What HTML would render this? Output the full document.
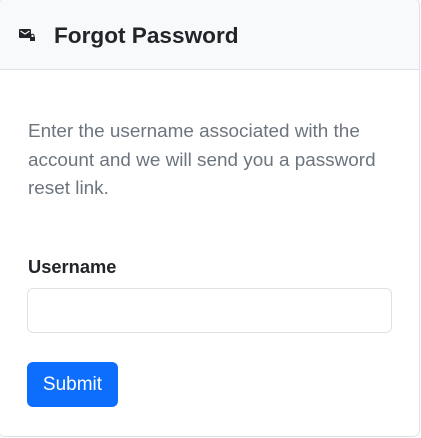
<!DOCTYPE html>
<html><head><style>
html,body{margin:0;padding:0;background:#fff;width:421px;height:438px;overflow:hidden}
body{font-family:"Liberation Sans",sans-serif;}
.card{position:absolute;left:-2px;top:-2px;width:422px;height:439px;border:1px solid #dee2e6;border-radius:7px;box-sizing:border-box;overflow:hidden;background:#fff}
.hdr{position:absolute;left:0;top:0;right:0;height:71px;background:#f8f9fa;border-bottom:1px solid #dee2e6;box-sizing:border-box}
.title{position:absolute;left:54px;top:22px;font-size:22.6px;font-weight:bold;color:#212529;line-height:28px}
.icon{position:absolute;left:19px;top:29px}
p{position:absolute;left:28px;top:118px;margin:0;width:368px;font-size:18.9px;line-height:28.5px;color:#6c757d}
.lbl{position:absolute;left:28px;top:256px;font-size:18.3px;font-weight:bold;color:#212529}
.inp{position:absolute;left:27px;top:288px;width:365px;height:45px;border:1px solid #dee2e6;border-radius:6px;box-sizing:border-box}
.btn{position:absolute;left:27px;top:362px;width:91px;height:45px;background:#0d6efd;border-radius:6px;color:#ffffff;font-size:19px;line-height:45px;text-align:center}
</style></head><body>
<div class="card"><div class="hdr"></div></div>
<svg class="icon" width="17" height="12" viewBox="0 0 17 12">
<rect x="0" y="0" width="12" height="9" rx="1" fill="#212529"/>
<path d="M1.5 2 L6 5 L10.5 2" stroke="#f8f9fa" stroke-width="1.3" fill="none"/>
<rect x="11" y="8" width="5" height="4" fill="#212529"/>
<path d="M12 8.5 V6.8 a1.5 1.5 0 0 1 3 0 V8.5" stroke="#212529" stroke-width="1" fill="none"/>
</svg>
<div class="title">Forgot Password</div>
<p>Enter the username associated with the account and we will send you a password reset link.</p>
<div class="lbl">Username</div>
<div class="inp"></div>
<div class="btn">Submit</div>
</body></html>
